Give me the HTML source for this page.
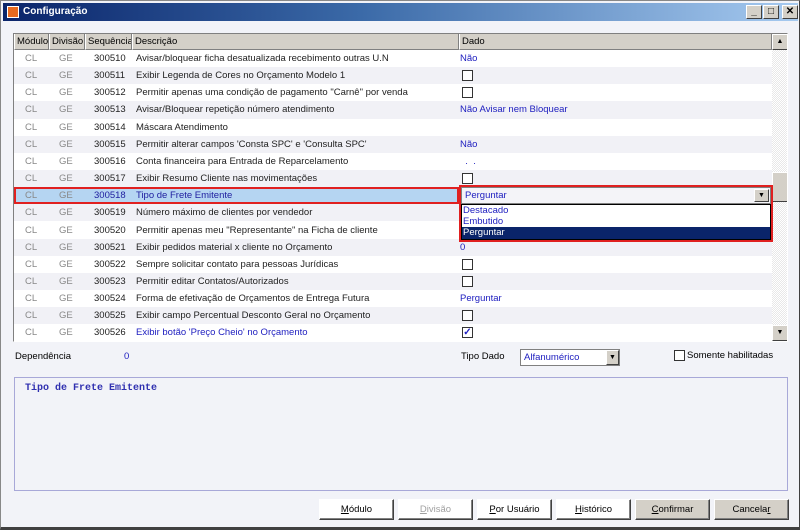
<!DOCTYPE html>
<html><head><meta charset="utf-8"><style>
*{box-sizing:border-box;margin:0;padding:0}
body{width:800px;height:530px;overflow:hidden;background:#f2f3f8;font-family:"Liberation Sans",sans-serif;font-size:9.5px;position:relative}
.win{position:absolute;left:0;top:0;width:800px;height:530px;border:1px solid #888;border-right-color:#404040;border-bottom:3px solid #404040;background:#f2f3f8}
.title{position:absolute;left:2px;top:2px;width:795px;height:18px;background:linear-gradient(90deg,#0a246a,#3b6aa8 45%,#a6caf0);color:#fff;font-weight:bold;font-size:10px;line-height:18px;padding-left:20px}
.ico{position:absolute;left:4px;top:3px;width:12px;height:12px;background:#e86a20;border:1px solid #fff}
.tb{position:absolute;top:4px;width:16px;height:14px;background:#d4d0c8;border:1px solid;border-color:#fff #404040 #404040 #fff;font-size:10px;color:#000;text-align:center;line-height:12px;font-weight:bold}
.abs{position:absolute}
.grid{position:absolute;left:12px;top:32px;width:775px;height:309px;border:1px solid;border-color:#808080 #fff #fff #808080;background:#fff;overflow:hidden}
.hdr{position:absolute;top:0;height:16px;background:#d4d0c8;border-right:1px solid #808080;border-bottom:1px solid #808080;border-left:1px solid #fff;line-height:15px;padding-left:2px;color:#000;white-space:nowrap;overflow:hidden}
.row{position:absolute;left:0;width:758px;height:17.15px;line-height:17px}
.row span{position:absolute;top:0;white-space:nowrap}
.c1{left:11px;color:#888}.c2{left:45px;color:#888}.c3{left:80px;color:#222}.c4{left:122px;color:#222}.c5{left:446px;color:#2020c0}
.cb{position:absolute;left:448px;top:3px;width:11px;height:11px;border:1px solid #333;background:#fff}
.sb{position:absolute;left:758px;top:0;width:16px;height:307px;background:repeating-conic-gradient(#e8e8e8 0 25%,#fff 0 50%) 0 0/2px 2px}
.sbtn{position:absolute;left:0;width:16px;height:16px;background:#d4d0c8;border:1px solid;border-color:#fff #404040 #404040 #fff;font-size:7px;text-align:center;line-height:14px}
.btn{position:absolute;top:498px;height:21px;width:75px;background:#fff;border:1px solid;border-color:#fff #404040 #404040 #fff;box-shadow:inset -1px -1px #808080;text-align:center;line-height:19px;color:#000}
.btn u{text-decoration:underline}
</style></head><body>
<div class="win">
<div class="title"><div class="ico"></div>Configuração</div>
<div class="tb" style="left:745px">_</div><div class="tb" style="left:762px">□</div><div class="tb" style="left:781px">✕</div>

<div class="grid">
<div class="hdr" style="left:0;width:35px">Módulo</div>
<div class="hdr" style="left:35px;width:36px">Divisão</div>
<div class="hdr" style="left:71px;width:47px">Sequência</div>
<div class="hdr" style="left:118px;width:327px">Descrição</div>
<div class="hdr" style="left:445px;width:313px">Dado</div>
<div class="sb"><div class="sbtn" style="top:0">▲</div><div class="sbtn" style="top:138px;height:30px"></div><div class="sbtn" style="top:291px">▼</div></div>

<div class="row" style="top:16px;background:#fff"><span class="c1">CL</span><span class="c2">GE</span><span class="c3">300510</span><span class="c4">Avisar/bloquear ficha desatualizada recebimento outras U.N</span><span class="c5">Não</span></div>
<div class="row" style="top:33.15px;background:#f1f1f6"><span class="c1">CL</span><span class="c2">GE</span><span class="c3">300511</span><span class="c4">Exibir Legenda de Cores no Orçamento Modelo 1</span><div class="cb"></div></div>
<div class="row" style="top:50.3px;background:#fff"><span class="c1">CL</span><span class="c2">GE</span><span class="c3">300512</span><span class="c4">Permitir apenas uma condição de pagamento "Carnê" por venda</span><div class="cb"></div></div>
<div class="row" style="top:67.45px;background:#f1f1f6"><span class="c1">CL</span><span class="c2">GE</span><span class="c3">300513</span><span class="c4">Avisar/Bloquear repetição número atendimento</span><span class="c5">Não Avisar nem Bloquear</span></div>
<div class="row" style="top:84.6px;background:#fff"><span class="c1">CL</span><span class="c2">GE</span><span class="c3">300514</span><span class="c4">Máscara Atendimento</span></div>
<div class="row" style="top:101.75px;background:#f1f1f6"><span class="c1">CL</span><span class="c2">GE</span><span class="c3">300515</span><span class="c4">Permitir alterar campos 'Consta SPC' e 'Consulta SPC'</span><span class="c5">Não</span></div>
<div class="row" style="top:118.9px;background:#fff"><span class="c1">CL</span><span class="c2">GE</span><span class="c3">300516</span><span class="c4">Conta financeira para Entrada de Reparcelamento</span><span class="c5">&nbsp;&nbsp;.&nbsp;&nbsp;.</span></div>
<div class="row" style="top:136.05px;background:#f1f1f6"><span class="c1">CL</span><span class="c2">GE</span><span class="c3">300517</span><span class="c4">Exibir Resumo Cliente nas movimentações</span><div class="cb"></div></div>
<div class="row" style="top:153.2px;background:#fff"><div style="position:absolute;left:0;top:0;width:445px;height:17px;background:#b5d5f2;border:2px solid #e02020"></div><span class="c1">CL</span><span class="c2">GE</span><span class="c3" style="color:#2020a0">300518</span><span class="c4" style="color:#2020a0">Tipo de Frete Emitente</span></div>
<div class="row" style="top:170.35px;background:#f1f1f6"><span class="c1">CL</span><span class="c2">GE</span><span class="c3">300519</span><span class="c4">Número máximo de clientes por vendedor</span></div>
<div class="row" style="top:187.5px;background:#fff"><span class="c1">CL</span><span class="c2">GE</span><span class="c3">300520</span><span class="c4">Permitir apenas meu "Representante" na Ficha de cliente</span></div>
<div class="row" style="top:204.65px;background:#f1f1f6"><span class="c1">CL</span><span class="c2">GE</span><span class="c3">300521</span><span class="c4">Exibir pedidos material x cliente no Orçamento</span><span class="c5">0</span></div>
<div class="row" style="top:221.8px;background:#fff"><span class="c1">CL</span><span class="c2">GE</span><span class="c3">300522</span><span class="c4">Sempre solicitar contato para pessoas Jurídicas</span><div class="cb"></div></div>
<div class="row" style="top:238.95px;background:#f1f1f6"><span class="c1">CL</span><span class="c2">GE</span><span class="c3">300523</span><span class="c4">Permitir editar Contatos/Autorizados</span><div class="cb"></div></div>
<div class="row" style="top:256.1px;background:#fff"><span class="c1">CL</span><span class="c2">GE</span><span class="c3">300524</span><span class="c4">Forma de efetivação de Orçamentos de Entrega Futura</span><span class="c5">Perguntar</span></div>
<div class="row" style="top:273.25px;background:#f1f1f6"><span class="c1">CL</span><span class="c2">GE</span><span class="c3">300525</span><span class="c4">Exibir campo Percentual Desconto Geral no Orçamento</span><div class="cb"></div></div>
<div class="row" style="top:290.4px;background:#fff"><span class="c1">CL</span><span class="c2">GE</span><span class="c3">300526</span><span class="c4" style="color:#2020c0">Exibir botão 'Preço Cheio' no Orçamento</span><div class="cb" style="color:#2020c0;font-size:10px;line-height:9px;text-align:center;font-weight:bold">✓</div></div>
</div>

<div class="abs" style="left:458px;top:184px;width:314px;height:57px;border:2px solid #e02020;background:#f4f4f8"></div>
<div class="abs" style="left:460px;top:186px;width:310px;height:17px;border:1px solid #808080;background:#f4f4f8;color:#2020c0;line-height:16px;padding-left:3px">Perguntar</div>
<div class="abs" style="left:753px;top:188px;width:15px;height:13px;background:#d4d0c8;border:1px solid;border-color:#fff #404040 #404040 #fff;font-size:7px;text-align:center;line-height:11px">▼</div>
<div class="abs" style="left:460px;top:203px;width:310px;height:36px;border:1px solid #000;background:#fff">
<div style="height:11px;line-height:11px;color:#2020c0;padding-left:1px">Destacado</div>
<div style="height:11px;line-height:11px;color:#2020c0;padding-left:1px">Embutido</div>
<div style="height:12px;line-height:12px;color:#fff;background:#0a246a;padding-left:1px">Perguntar</div>
</div>

<div class="abs" style="left:14px;top:350px">Dependência</div>
<div class="abs" style="left:123px;top:350px;color:#2020c0">0</div>
<div class="abs" style="left:460px;top:350px">Tipo Dado</div>
<div class="abs" style="left:519px;top:348px;width:100px;height:17px;border:1px solid #808080;background:#fff;color:#2020c0;padding-left:3px;line-height:15px">Alfanumérico</div>
<div class="abs" style="left:605px;top:349px;width:13px;height:15px;background:#d4d0c8;border:1px solid;border-color:#fff #404040 #404040 #fff;font-size:7px;text-align:center;line-height:13px">▼</div>
<div class="abs" style="left:673px;top:349px;width:11px;height:11px;border:1px solid #333;background:#fff"></div>
<div class="abs" style="left:686px;top:349px">Somente habilitadas</div>

<div class="abs" style="left:13px;top:376px;width:774px;height:114px;border:1px solid #a8a8d8;background:#f2f3f8"></div>
<div class="abs" style="left:24px;top:382px;font-family:'Liberation Mono',monospace;font-weight:bold;color:#3030b0;font-size:10px">Tipo de Frete Emitente</div>

<div class="btn" style="left:318px"><u>M</u>ódulo</div>
<div class="btn" style="left:397px;color:#a0a0a0"><u>D</u>ivisão</div>
<div class="btn" style="left:476px"><u>P</u>or Usuário</div>
<div class="btn" style="left:555px"><u>H</u>istórico</div>
<div class="btn" style="left:634px;background:#d4d0c8"><u>C</u>onfirmar</div>
<div class="btn" style="left:713px;background:#d4d0c8">Cancela<u>r</u></div>
</div>
</body></html>
